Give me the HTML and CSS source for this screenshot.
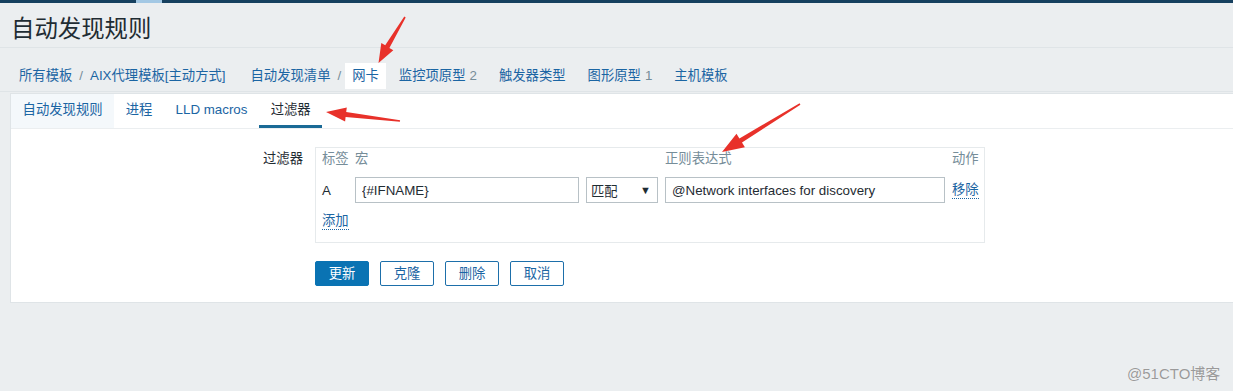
FILE: index.html
```html
<!DOCTYPE html>
<html lang="zh-CN">
<head>
<meta charset="utf-8">
<title>自动发现规则</title>
<link rel="stylesheet" href="styles.css">
</head>
<body>
<div class="topbar"></div>
<header class="page-header">
  <h1 class="page-title">自动发现规则</h1>
</header>
<nav class="breadcrumbs">
  <div class="crumb-group first-group"><a class="crumb">所有模板</a><span class="sep">/</span><a class="crumb">AIX代理模板[主动方式]</a></div>
  <div class="crumb-group"><a class="crumb">自动发现清单</a><span class="sep">/</span><span class="crumb selected">网卡</span></div>
  <div class="crumb-group"><a class="crumb">监控项原型</a><span class="count">2</span></div>
  <div class="crumb-group"><a class="crumb">触发器类型</a></div>
  <div class="crumb-group"><a class="crumb">图形原型</a><span class="count">1</span></div>
  <div class="crumb-group"><a class="crumb">主机模板</a></div>
</nav>
<main class="panel">
  <div class="tabs">
    <a class="tab tab-hover">自动发现规则</a>
    <a class="tab">进程</a>
    <a class="tab">LLD macros</a>
    <span class="tab tab-active">过滤器</span>
  </div>
  <form class="form">
    <div class="form-row">
      <label class="form-label">过滤器</label>
      <div class="filter-box">
        <div class="fh">标签</div>
        <div class="fh">宏</div>
        <div class="fh"></div>
        <div class="fh">正则表达式</div>
        <div class="fh">动作</div>

        <div class="fcell">A</div>
        <input class="text-input" type="text" value="{#IFNAME}">
        <div class="select"><span>匹配</span><span class="caret">▼</span></div>
        <input class="text-input" type="text" value="@Network interfaces for discovery">
        <div class="fcell"><a class="link-dotted">移除</a></div>

        <div class="fcell add-cell"><a class="link-dotted">添加</a></div>
      </div>
    </div>
    <div class="buttons">
      <button type="button" class="btn btn-primary">更新</button>
      <button type="button" class="btn">克隆</button>
      <button type="button" class="btn">删除</button>
      <button type="button" class="btn">取消</button>
    </div>
  </form>
</main>
<div class="watermark">@51CTO博客</div>
<svg class="annotations" width="1233" height="391" viewBox="0 0 1233 391">
  <polygon fill="#e8312a" points="405.7,17.4 389.4,47.9 393.3,50.2 378.5,63 381.3,43.0 385.2,45.3 404.3,16.6"/>
  <polygon fill="#e8312a" points="400.1,120.2 346.2,111.9 346.8,107.4 326,112 345.1,121.4 345.6,116.9 399.9,121.8"/>
  <polygon fill="#e8312a" points="799.6,103.3 739.4,138.4 736.5,133.7 722,152 744.9,147.3 742.0,142.6 800.4,104.7"/>
</svg>
</body>
</html>
```

FILE: styles.css
```css
* { box-sizing: border-box; }

html, body {
  margin: 0;
  padding: 0;
}

body {
  position: relative;
  width: 1233px;
  min-height: 391px;
  overflow: hidden;
  background: #ebeef0;
  color: #1f2c33;
  font-family: "Liberation Sans", Arial, "Noto Sans CJK SC", sans-serif;
  font-size: 13.33px;
}

.topbar {
  height: 3px;
  background: linear-gradient(to right, #16405f 0, #16405f 136px, #a3c8e4 136px, #a3c8e4 162px, #16405f 162px);
}

.page-header {
  height: 45px;
  padding: 9px 11px 0;
  border-bottom: 1px solid #dfe4e7;
}

.page-title {
  margin: 0;
  font-size: 23.4px;
  font-weight: normal;
  line-height: 34px;
  color: #1f2c33;
}

.breadcrumbs {
  display: flex;
  gap: 22px;
  height: 44px;
  padding: 13px 0 0 19px;
  border-bottom: 1px solid #dfe4e7;
  margin-bottom: 1px;
  line-height: 26px;
}

.crumb-group {
  display: flex;
  align-items: center;
}

.first-group {
  margin-right: 3px;
}

.crumb {
  color: #1b65a3;
  text-decoration: none;
}

.crumb.selected {
  background: #ffffff;
  padding: 0 7px;
  margin-left: -3px;
  margin-right: -9px;
}

.sep {
  margin: 0 7px;
  color: #768d99;
}

.count {
  margin-left: 4px;
  color: #768d99;
}

.panel {
  margin-left: 10px;
  background: #ffffff;
  border: 1px solid #dfe4e7;
  border-right: 0;
}

.tabs {
  display: flex;
  height: 35px;
  border-bottom: 1px solid #ebeef0;
}

.tab {
  height: 34px;
  padding: 0 11.6px;
  line-height: 32px;
  color: #1b65a3;
  text-decoration: none;
}

.tab-hover {
  background: #f4f8fb;
}

.tab-active {
  color: #1f2c33;
  box-shadow: inset 0 -3px 0 #1a6a96;
}

.form {
  padding: 18px 0 16px;
}

.form-row {
  display: grid;
  grid-template-columns: 292px auto;
  column-gap: 12px;
  align-items: start;
}

.form-label {
  text-align: right;
  line-height: 20px;
  margin-top: 2px;
}

.filter-box {
  width: 670px;
  display: grid;
  grid-template-columns: 26px 224px 72px 280px auto;
  grid-template-rows: 20px 26px 20px;
  column-gap: 7px;
  row-gap: 8px;
  padding: 1px 6px 11px;
  border: 1px solid #e6eaec;
}

.fh {
  color: #768d99;
  line-height: 20px;
  white-space: nowrap;
}

.fcell {
  display: flex;
  align-items: center;
  white-space: nowrap;
}

.add-cell {
  grid-column: 1 / span 2;
}

.text-input {
  height: 26px;
  margin: 0;
  padding: 0 6px;
  border: 1px solid #b8c1c6;
  font-family: inherit;
  font-size: 13.33px;
  color: #1f2c33;
  background: #ffffff;
}

.select {
  display: flex;
  justify-content: space-between;
  align-items: center;
  height: 26px;
  padding: 0 6px 0 4px;
  border: 1px solid #b8c1c6;
  background: #ffffff;
}

.caret {
  font-size: 11px;
  color: #1f2c33;
}

.link-dotted {
  color: #1b65a3;
  text-decoration: none;
  border-bottom: 1px dotted #1b65a3;
  line-height: 16px;
}

.buttons {
  display: flex;
  gap: 11px;
  margin: 18px 0 0 304px;
}

.btn {
  width: 54px;
  height: 25px;
  padding: 0;
  margin: 0;
  border: 1px solid #1d6faa;
  border-radius: 2px;
  background: #ffffff;
  color: #1b65a3;
  font-family: inherit;
  font-size: 13.33px;
  line-height: 23px;
  text-align: center;
}

.btn-primary {
  background: #0a73b3;
  border-color: #0a73b3;
  color: #ffffff;
}

.watermark {
  position: absolute;
  left: 1127px;
  top: 364px;
  font-size: 15px;
  line-height: 20px;
  color: #9a9a9a;
  text-shadow: 0 0 1px #ffffff;
  white-space: nowrap;
}

.annotations {
  position: absolute;
  left: 0;
  top: 0;
  pointer-events: none;
}
```
